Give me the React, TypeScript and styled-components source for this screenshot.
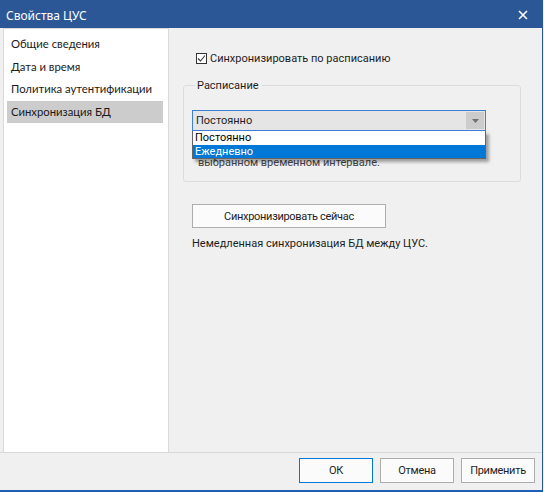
import React from "react";
import styled, { createGlobalStyle } from "styled-components";

const GlobalStyle = createGlobalStyle`
  html, body {
    margin: 0;
    padding: 0;
    background: #f0f0f0;
  }
  body {
    font-family: "Noto Sans", "Liberation Sans", sans-serif;
    font-size: 12px;
    color: #000;
  }
`;

const sections = [
  "Общие сведения",
  "Дата и время",
  "Политика аутентификации",
  "Синхронизация БД",
];

export default function App() {
  return (
    <>
      <GlobalStyle />
      <Window>
        <TitleBar>
          <Title>Свойства ЦУС</Title>
          <CloseButton>
            <svg width="10" height="10" viewBox="0 0 10 10">
              <path d="M1 1L9 9M9 1L1 9" stroke="#fff" strokeWidth="1.6" />
            </svg>
          </CloseButton>
        </TitleBar>
        <Body>
          <SectionList>
            {sections.map((s, i) => (
              <SectionItem key={s} $active={i === 3}>
                {s}
              </SectionItem>
            ))}
          </SectionList>
          <Content>
            <CheckRow>
              <CheckBox>
                <svg width="9" height="9" viewBox="0 0 9 9">
                  <path d="M1 4.5L3.5 7L8 1.5" stroke="#333" strokeWidth="1.1" fill="none" />
                </svg>
              </CheckBox>
              Синхронизировать по расписанию
            </CheckRow>
            <GroupBox>
              <Legend>Расписание</Legend>
              <SelectWrap>
                <Select>
                  <span>Постоянно</span>
                  <SelectArrow>
                    <svg width="7" height="4" viewBox="0 0 7 4">
                      <path d="M0 0H7L3.5 4Z" fill="#707070" />
                    </svg>
                  </SelectArrow>
                </Select>
                <DropList>
                  <DropItem>Постоянно</DropItem>
                  <DropItem $selected>Ежедневно</DropItem>
                </DropList>
              </SelectWrap>
              <GroupText>
                Синхронизация выполняется ежедневно в
                <br />
                выбранном временном интервале.
              </GroupText>
            </GroupBox>
            <SyncButton>Синхронизировать сейчас</SyncButton>
            <Hint>Немедленная синхронизация БД между ЦУС.</Hint>
          </Content>
        </Body>
        <Footer>
          <DialogButton $primary>ОК</DialogButton>
          <DialogButton>Отмена</DialogButton>
          <DialogButton>Применить</DialogButton>
        </Footer>
      </Window>
    </>
  );
}

const Window = styled.div`
  width: 543px;
  height: 492px;
  box-sizing: border-box;
  display: flex;
  flex-direction: column;
  background: #f0f0f0;
  border-right: 1px solid #2b5797;
  border-bottom: 2px solid #1f5fb8;
`;

const TitleBar = styled.div`
  height: 28px;
  flex: none;
  display: flex;
  align-items: center;
  justify-content: space-between;
  background: #2b5797;
  color: #fff;
  padding: 0 14px 0 6px;
`;

const Title = styled.div`
  font-size: 12px;
  padding-top: 2px;
`;

const CloseButton = styled.div`
  display: flex;
  padding-top: 2px;
`;

const Body = styled.div`
  flex: 1;
  display: flex;
  padding-left: 3px;
  border-bottom: 1px solid #d8d8d8;
`;

const SectionList = styled.div`
  width: 166px;
  flex: none;
  background: #fff;
  border: 1px solid #dadada;
  border-bottom: none;
  padding: 4px 5px 0 3px;
  box-sizing: border-box;
`;

const SectionItem = styled.div<{ $active?: boolean }>`
  height: 22px;
  line-height: 22px;
  padding-left: 4px;
  font-family: Lato, "Noto Sans", sans-serif;
  font-size: 11.3px;
  white-space: nowrap;
  color: #1a1a1a;
  background: ${(p) => (p.$active ? "#cccccc" : "transparent")};
  margin-bottom: 0.5px;
`;

const Content = styled.div`
  flex: 1;
  display: flex;
  flex-direction: column;
  align-items: flex-start;
  padding: 23px 19px 0 14px;
  font-family: Roboto, "Liberation Sans", sans-serif;
  font-size: 11px;
  color: #1e1e1e;
`;

const CheckRow = styled.div`
  display: flex;
  align-items: center;
  gap: 3px;
  margin-left: 13px;
  height: 14px;
`;

const CheckBox = styled.div`
  width: 11px;
  height: 11px;
  box-sizing: border-box;
  border: 1px solid #333;
  background: #fff;
  display: flex;
  align-items: center;
  justify-content: center;
`;

const GroupBox = styled.fieldset`
  margin: 14px 0 0 0;
  width: 338px;
  height: 103px;
  box-sizing: border-box;
  border: 1px solid #dcdcdc;
  border-radius: 3px;
  padding: 18px 0 0 8px;
  min-width: 0;
`;

const Legend = styled.legend`
  padding: 0 3px 0 2px;
  margin-left: 3px;
  color: #1e1e1e;
`;

const SelectWrap = styled.div`
  position: relative;
  width: 294px;
`;

const Select = styled.div`
  height: 21px;
  box-sizing: border-box;
  border: 1px solid #3c7fd4;
  background: #e5e5e5;
  display: flex;
  align-items: center;
  justify-content: space-between;
  padding-left: 3px;
`;

const SelectArrow = styled.div`
  width: 18px;
  height: 17px;
  margin-right: 1px;
  background: #cccccc;
  display: flex;
  align-items: center;
  justify-content: center;
`;

const DropList = styled.div`
  position: absolute;
  left: 0;
  top: 21px;
  width: 294px;
  box-sizing: border-box;
  border: 1px solid #646464;
  border-top: none;
  background: #fff;
  box-shadow: 3px 3px 3px rgba(0, 0, 0, 0.35);
  z-index: 2;
`;

const DropItem = styled.div<{ $selected?: boolean }>`
  height: 13.5px;
  line-height: 13px;
  padding-left: 2px;
  background: ${(p) => (p.$selected ? "#0078d7" : "#fff")};
  color: ${(p) => (p.$selected ? "#fff" : "#000")};
`;

const GroupText = styled.div`
  margin: 9px 0 0 6px;
  line-height: 15px;
  color: #444;
`;

const SyncButton = styled.div`
  margin: 22px 0 0 9px;
  width: 194px;
  height: 24px;
  box-sizing: border-box;
  border: 1px solid #adadad;
  background: #fbfbfb;
  display: flex;
  align-items: center;
  justify-content: center;
  letter-spacing: -0.3px;
`;

const Hint = styled.div`
  margin: 9px 0 0 9px;
`;

const Footer = styled.div`
  height: 37px;
  flex: none;
  display: flex;
  justify-content: flex-end;
  align-items: flex-start;
  gap: 7px;
  padding: 5px 7px 0 0;
  box-sizing: border-box;
`;

const DialogButton = styled.div<{ $primary?: boolean }>`
  width: 74px;
  height: 25px;
  box-sizing: border-box;
  border: 1px solid ${(p) => (p.$primary ? "#0078d7" : "#adadad")};
  background: #fbfbfb;
  display: flex;
  align-items: center;
  justify-content: center;
  font-family: Roboto, "Liberation Sans", sans-serif;
  font-size: 11px;
  letter-spacing: -0.3px;
  color: #1e1e1e;
`;
